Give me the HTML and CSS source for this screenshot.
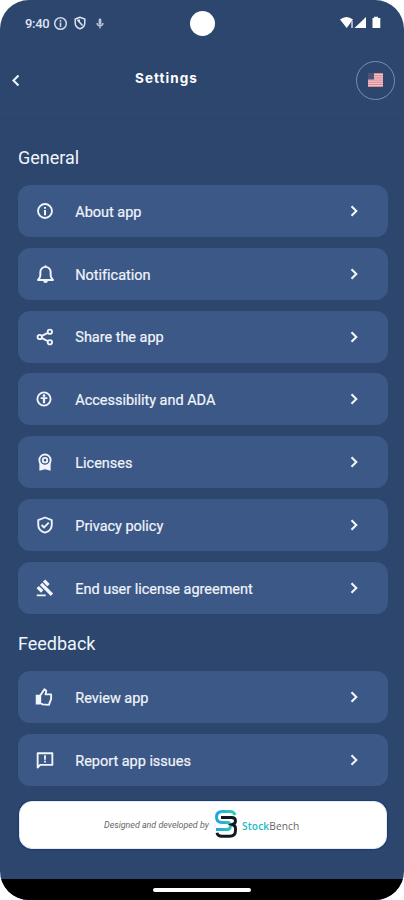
FILE: index.html
```html
<!DOCTYPE html>
<html lang="en">
<head>
<meta charset="utf-8">
<title>Settings</title>
<link rel="stylesheet" href="styles.css">
</head>
<body>
<svg class="defs" width="0" height="0" aria-hidden="true">
  <symbol id="info" viewBox="0 0 24 24"><g class="line"><circle cx="12" cy="12" r="9.300"/></g><path d="M10.700 6.500h2.600v2.600h-2.600zm0 4h2.600v7h-2.600z"/></symbol>
  <symbol id="bell" viewBox="0 0 24 24"><g class="line"><path d="M2.500 19.500c1.800-1.500 3-3.500 3-6V9.500a6.500 6.500 0 0 1 13 0v4c0 2.500 1.200 4.500 3 6z"/></g><path d="M9 20.500h6a3 3 0 0 1-6 0zM11 1h2v3h-2z"/></symbol>
  <symbol id="share" viewBox="0 0 24 24"><g class="line"><circle cx="5" cy="12" r="2.900"/><circle cx="18.500" cy="5" r="2.900"/><circle cx="18.500" cy="19" r="2.900"/><path d="m7.800 10.500 8-4.100m-8 7.100 8 4.100"/></g></symbol>
  <symbol id="access" viewBox="0 0 24 24"><g class="line"><circle cx="12" cy="12" r="8.800"/></g><circle cx="12" cy="7.500" r="1.900"/><path d="M7.500 9.800h9v2.200h-3v5.500h-3V12h-3z"/></symbol>
  <symbol id="badge" viewBox="0 0 24 24"><g class="line"><circle cx="12" cy="9.500" r="7.500"/><circle cx="12" cy="9.500" r="3"/></g><path d="M4.500 14h3l4.500 3 4.500-3h3v9.500L12 21.500l-7.500 2z"/></symbol>
  <symbol id="shield" viewBox="0 0 24 24"><g class="line"><path d="M12 2 3 5.500V12c0 5 3.600 8.600 9 10.200 5.400-1.600 9-5.200 9-10.200V5.500zM7.500 12l3.300 3.300L17 8.800"/></g></symbol>
  <symbol id="gavel" viewBox="0 0 24 24"><path d="M1 20.700h12V23H1zM5.240 8.070l3.130-3.130 14.440 14.440-3.130 3.130zM12.320 .7l5.960 5.960-3.130 3.130-5.960-5.960zM3.830 9.180l5.960 5.960-3.130 3.130L.7 12.310z"/></symbol>
  <symbol id="thumb" viewBox="0 0 24 24"><path d="M1 9h6v13H1z"/><g class="line"><path d="M7 10 12.500 1.800l2.500 2L14 8.500h7.500v6L18.500 22.500 10 21.800 7 20z"/></g></symbol>
  <symbol id="report" viewBox="0 0 24 24"><g class="line"><path d="M2.200 3h19.600v15.500H5.500L2.200 22z"/></g><path d="M10.800 5.500h2.400v6h-2.400zm0 7.500h2.400v2.400h-2.400z"/></symbol>
  <symbol id="next" viewBox="0 0 8 12"><path class="chevron" d="m1.500 1.200 4.800 4.800-4.800 4.800"/></symbol>
</svg>
<div class="phone">
  <header class="status">
    <span class="time">9:40</span>
    <svg class="s-info"><use href="#info"/></svg>
    <svg class="s-shield" viewBox="0 0 12 14"><path class="outline" d="M6 1.200 1.200 3v4c0 3 2 4.800 4.800 5.800C8.800 11.800 10.800 10 10.800 7V3zM3.500 4l5 5.500"/><path d="M3 3.500h3v3z"/></svg>
    <svg class="s-mic" viewBox="0 0 8 12"><rect x="2.500" y="0.500" width="3" height="7" rx="1.500"/><path class="outline" d="M.8 5.500c0 4 6.400 4 6.400 0M4 8.500v3"/></svg>
    <svg class="s-signal" viewBox="0 0 42 14"><path d="M0 3.500q6.500-5 13 0L6.700 12z"/><path class="dim" d="M11 5h2v7h-2z"/><path d="M14.500 12 26 1v11zM32.500 2H34V.700h4V2h2.300v10h-7.800z"/></svg>
    <span class="camera"></span>
  </header>
  <div class="toolbar">
    <svg class="back" viewBox="0 0 8 12"><path class="chevron" d="M6.500 1 1.500 6l5 5"/></svg>
    <h1>Settings</h1>
    <button class="lang" aria-label="Language"><svg viewBox="0 0 15 14"><path fill="#efc3ca" d="M0 0h15v14H0z"/><path stroke="#dd8791" stroke-width="1" d="M0 .5h15M0 2.700h15M0 4.900h15M0 7.100h15M0 9.300h15M0 11.500h15M0 13.500h15"/><path fill="#4c5278" d="M0 0h6v6.500H0z"/></svg></button>
  </div>
  <main>
    <h2>General</h2>
    <ul>
      <li><svg class="icon"><use href="#info"/></svg><span>About app</span><svg class="next"><use href="#next"/></svg></li>
      <li><svg class="icon big"><use href="#bell"/></svg><span>Notification</span><svg class="next"><use href="#next"/></svg></li>
      <li><svg class="icon"><use href="#share"/></svg><span>Share the app</span><svg class="next"><use href="#next"/></svg></li>
      <li><svg class="icon left"><use href="#access"/></svg><span>Accessibility and ADA</span><svg class="next"><use href="#next"/></svg></li>
      <li><svg class="icon"><use href="#badge"/></svg><span>Licenses</span><svg class="next"><use href="#next"/></svg></li>
      <li><svg class="icon"><use href="#shield"/></svg><span>Privacy policy</span><svg class="next"><use href="#next"/></svg></li>
      <li><svg class="icon"><use href="#gavel"/></svg><span>End user license agreement</span><svg class="next"><use href="#next"/></svg></li>
    </ul>
    <h2 class="second">Feedback</h2>
    <ul>
      <li><svg class="icon left"><use href="#thumb"/></svg><span>Review app</span><svg class="next"><use href="#next"/></svg></li>
      <li><svg class="icon"><use href="#report"/></svg><span>Report app issues</span><svg class="next"><use href="#next"/></svg></li>
    </ul>
    <footer>
      <em>Designed and developed by</em>
      <svg class="logo" viewBox="0 0 22 28">
        <defs><linearGradient id="teal" x1="0" y1="0" x2="1" y2="0"><stop offset="0" stop-color="#1ba6df"/><stop offset="1" stop-color="#36cbb1"/></linearGradient></defs>
        <path stroke="url(#teal)" d="M20 5Q19 1.500 15 1.500H7.500Q1.500 1.500 1.500 7T7 12.500h5Q15.500 12.500 15.500 16T12 19.500H1"/>
        <path stroke="#111820" d="M6 7.500h10.500q4 0 4 3.500 0 2.500-3 3.500 3 1 3 4v2q0 5.800-6 5.800H7q-4.500 0-5-3.500"/>
      </svg>
      <strong><b>Stock</b>Bench</strong>
    </footer>
  </main>
  <div class="nav"><span></span></div>
</div>
</body>
</html>
```

FILE: styles.css
```css
* { box-sizing: border-box; }
body { margin: 0; background: #fff; font-family: Roboto, sans-serif; color: #f0f4fb; }
.defs { position: absolute; }
svg { display: block; fill: currentColor; flex: none; }
.line { fill: none; stroke: currentColor; stroke-width: 2.5; stroke-linejoin: round; }
.chevron { fill: none; stroke: currentColor; stroke-width: 2.1; }
.outline { fill: none; stroke: currentColor; stroke-width: 1.5; }
.phone { width: 404px; height: 900px; overflow: hidden; display: flex; flex-direction: column; background: #2c466e; border-radius: 29px; }
.status { position: relative; height: 46px; padding: 0 22px 0 25px; display: flex; align-items: center; flex: none; }
.time { font-size: 13px; font-weight: 500; width: 29px; letter-spacing: -.3px; color: #dce4f0; }
.s-info { width: 15px; height: 15px; margin-left: -1px; color: #cbd6e6; }
.s-shield { width: 12px; height: 14px; margin-left: 6px; color: #dce4f0; }
.s-mic { width: 8px; height: 11px; margin-left: 10px; color: #b9c6da; }
.s-signal { width: 42px; height: 14px; margin-left: auto; color: #fff; }
.dim { fill: #a6b1c5; }
.camera { position: absolute; left: 190px; top: 11px; width: 25px; height: 25px; border-radius: 50%; background: #fff; }
.toolbar { height: 68px; border-bottom: 1px solid #2e4a74; padding: 1px 9px 0 12px; display: grid; grid-template-columns: 123px 1fr 39px; align-items: center; flex: none; }
.back { width: 8px; height: 13px; }
h1 { margin: 0; font: 700 13.5px/20px Inter, sans-serif; letter-spacing: 1.05px; padding-bottom: 4px; color: #fff; }
.lang { width: 39px; height: 39px; padding: 0; border: 1px solid #7890ae; border-radius: 50%; background: none; display: grid; place-items: center; }
.lang svg { width: 15px; height: 14px; }
main { flex: 1; padding: 32px 16.5px 0 18px; }
h2 { margin: 0; font-weight: 400; font-size: 18px; line-height: 24px; }
h2.second { margin-top: 18.2px; }
ul { list-style: none; margin: 15px 0 0; padding: 0; display: grid; gap: 10.8px; }
li { height: 52px; padding: 0 29.5px 0 18px; display: flex; align-items: center; background: #3b5886; border-radius: 12px; font-size: 14.5px; letter-spacing: -.03px; -webkit-text-stroke: .2px currentColor; }
li span { flex: 1; margin-left: 21.3px; padding-top: 2.6px; }
.icon { width: 18px; height: 18px; }
.icon.big { width: 19px; height: 20px; margin-right: -1px; }
.icon.left { margin-left: -1.5px; margin-right: 1.5px; }
.next { width: 8px; height: 12px; }
footer { height: 48px; margin: 15.5px 1px 0; padding-left: 84px; display: flex; align-items: center; background: #fff; border-radius: 13px; border: 1px solid #e6eaf2; box-shadow: 0 0 1px 1px #1f3a70; color: #666; }
footer em { width: 111px; font-size: 8.9px; white-space: nowrap; }
.logo { width: 22px; height: 28px; fill: none; stroke-width: 2.9; margin-top: -2px; }
footer strong { margin-left: 5px; font: 400 10.2px "Open Sans", sans-serif; padding-top: 1px; letter-spacing: .1px; }
footer b { font-weight: 600; color: #24b9bf; }
.nav { height: 21px; background: #000; display: grid; place-items: center; flex: none; }
.nav span { width: 98px; height: 4px; border-radius: 2px; background: #fff; }
```
